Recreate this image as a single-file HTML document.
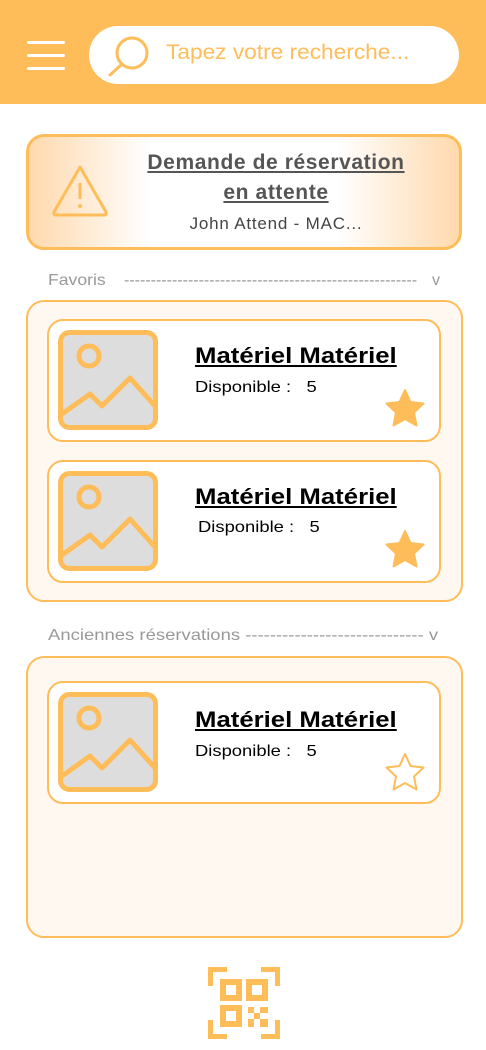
<!DOCTYPE html>
<html><head><meta charset="utf-8"><style>
*{margin:0;padding:0;box-sizing:border-box}
body{width:486px;height:1050px;background:#fff;position:relative;font-family:"Liberation Sans",sans-serif;overflow:hidden}
.abs{position:absolute}
.sx{transform-origin:0 0;white-space:nowrap}
.hdr{left:0;top:0;width:486px;height:104px;background:#FFBD59}
.ham{left:27px;width:38px;height:3px;background:#fff;border-radius:2px}
.search{left:89px;top:26px;width:370px;height:58px;background:#fff;border-radius:29px}
.alert{left:26px;top:134px;width:436px;height:116px;border:3px solid #FFBD59;border-radius:18px;background:linear-gradient(90deg,#FFD9AD 0%,#fff 28%,#fff 72%,#FFD9AD 100%)}
.lbl{color:#999;font-size:16px}
.panel{left:26px;width:437px;background:#FFF8F0;border:2px solid #FFBD59;border-radius:18px}
.card{left:47px;width:394px;height:123px;background:#fff;border:2px solid #FFBD59;border-radius:16px}
.t{font-weight:bold;font-size:22px;text-decoration:underline;color:#000;transform:scaleX(1.17)}
.d{font-size:16px;color:#000;transform:scaleX(1.15)}
</style></head><body>
<div class="abs hdr"></div>
<div class="abs ham" style="top:41px"></div>
<div class="abs ham" style="top:54px"></div>
<div class="abs ham" style="top:67px"></div>
<div class="abs search"></div>
<svg class="abs" style="left:105px;top:33px" width="50" height="45" viewBox="0 0 50 45"><circle cx="27" cy="20" r="15" fill="none" stroke="#FFBD59" stroke-width="3"/><line x1="17" y1="31" x2="5" y2="42" stroke="#FFBD59" stroke-width="3" stroke-linecap="round"/></svg>
<div class="abs sx" style="left:166px;top:41px;font-size:21px;color:#FFBD59;transform:scaleX(1.08)">Tapez votre recherche...</div>

<div class="abs alert"></div>
<svg class="abs" style="left:50px;top:163px" width="60" height="56" viewBox="0 0 60 56"><path d="M30 4 L56 49 Q57 52 54 52 L6 52 Q3 52 4 49 Z" fill="none" stroke="#FFBD59" stroke-width="3" stroke-linejoin="round"/><line x1="30" y1="20" x2="30" y2="36" stroke="#FFBD59" stroke-width="3"/><circle cx="30" cy="43" r="2" fill="#FFBD59"/></svg>
<div class="abs" style="left:142px;top:148px;width:268px;text-align:center;font-weight:bold;font-size:21px;color:#555;text-decoration:underline;line-height:30px;letter-spacing:0.6px">Demande de réservation<br>en attente</div>
<div class="abs" style="left:120px;top:214px;width:312px;text-align:center;font-size:17px;color:#444;letter-spacing:0.8px">John Attend - MAC...</div>

<div class="abs lbl sx" style="left:48px;top:272px;transform:scaleX(1.1)">Favoris</div>
<div class="abs lbl" style="left:124px;top:272px;width:293px;overflow:hidden;white-space:nowrap">-------------------------------------------------------------------------</div>
<div class="abs lbl" style="left:432px;top:272px">v</div>

<div class="abs panel" style="top:300px;height:302px"></div>
<div class="abs lbl sx" style="left:48px;top:627px;transform:scaleX(1.155)">Anciennes réservations ----------------------------- v</div>
<div class="abs panel" style="top:656px;height:282px"></div>

<div class="abs card" style="top:319px"></div>
<div class="abs card" style="top:460px"></div>
<div class="abs card" style="top:681px"></div>

<svg width="0" height="0" style="position:absolute"><defs>
<g id="img"><rect x="2.5" y="2.5" width="95" height="95" rx="9" fill="#DDD" stroke="#FFBD59" stroke-width="5"/><circle cx="31" cy="26" r="10" fill="none" stroke="#FFBD59" stroke-width="5"/><polyline points="4,84 32,64 44,76 72,48 97,76" fill="none" stroke="#FFBD59" stroke-width="5" stroke-linejoin="round"/></g>
<path id="star" d="M21 2 L26.5 14 L39.5 15.5 L30 24.5 L32.5 37.5 L21 31 L9.5 37.5 L12 24.5 L2.5 15.5 L15.5 14 Z" stroke-linejoin="round"/>
</defs></svg>
<svg class="abs" style="left:58px;top:330px" width="100" height="100"><use href="#img"/></svg>
<svg class="abs" style="left:58px;top:471px" width="100" height="100"><use href="#img"/></svg>
<svg class="abs" style="left:58px;top:692px" width="100" height="100"><use href="#img"/></svg>

<div class="abs t sx" style="left:195px;top:343px">Matériel Matériel</div>
<div class="abs d sx" style="left:195px;top:379px">Disponible :&nbsp;&nbsp; 5</div>
<div class="abs t sx" style="left:195px;top:484px">Matériel Matériel</div>
<div class="abs d sx" style="left:198px;top:519px">Disponible :&nbsp;&nbsp; 5</div>
<div class="abs t sx" style="left:195px;top:707px">Matériel Matériel</div>
<div class="abs d sx" style="left:195px;top:743px">Disponible :&nbsp;&nbsp; 5</div>

<svg class="abs" style="left:384px;top:388px" width="42" height="42"><use href="#star" fill="#FFBD59" stroke="#FFBD59" stroke-width="2"/></svg>
<svg class="abs" style="left:384px;top:529px" width="42" height="42"><use href="#star" fill="#FFBD59" stroke="#FFBD59" stroke-width="2"/></svg>
<svg class="abs" style="left:384px;top:752px" width="42" height="42"><use href="#star" fill="none" stroke="#FFBD59" stroke-width="2"/></svg>

<svg class="abs" style="left:208px;top:967px" width="72" height="72" viewBox="0 0 72 72" fill="#FFBD59">
<path d="M0 0h19v5H5v14H0z M72 0H53v5h14v14h5z M0 72h19v-5H5V53H0z M72 72H53v-5h14V53h5z"/>
<path fill-rule="evenodd" d="M12 12h22v22H12z M18 18v10h10V18z M38 12h22v22H38z M44 18v10h10V18z M12 38h22v22H12z M18 44v10h10V44z"/>
<path d="M40 40h6v6h-6z M52 40h8v6h-8z M46 46h6v6h-6z M40 52h6v8h-6z M52 52h8v8h-8z"/>
</svg>
</body></html>
